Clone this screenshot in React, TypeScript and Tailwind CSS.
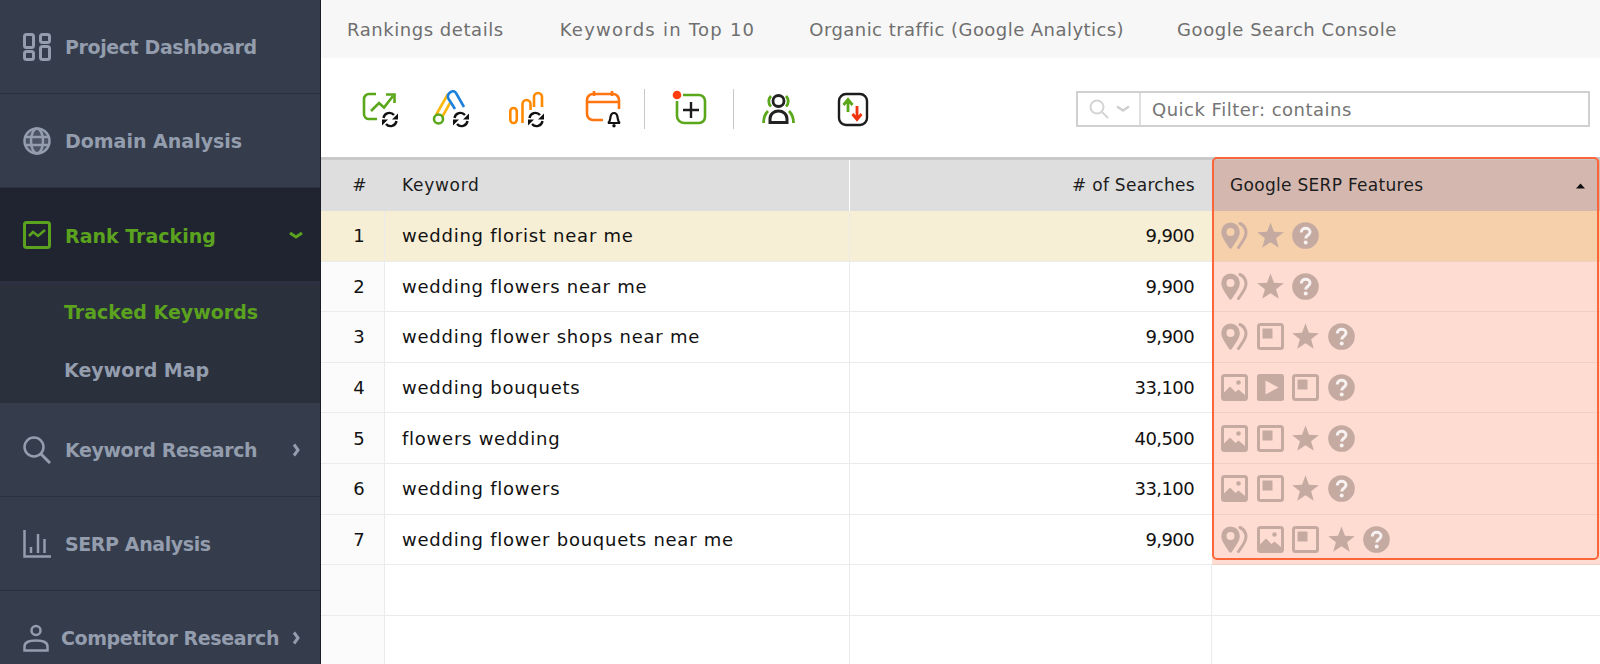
import type { ReactNode } from "react";

type Feature = "pin" | "star" | "help" | "image" | "video" | "snippet";

const rows: { keyword: string; searches: string; features: Feature[] }[] = [
  { keyword: "wedding florist near me", searches: "9,900", features: ["pin", "star", "help"] },
  { keyword: "wedding flowers near me", searches: "9,900", features: ["pin", "star", "help"] },
  { keyword: "wedding flower shops near me", searches: "9,900", features: ["pin", "snippet", "star", "help"] },
  { keyword: "wedding bouquets", searches: "33,100", features: ["image", "video", "snippet", "help"] },
  { keyword: "flowers wedding", searches: "40,500", features: ["image", "snippet", "star", "help"] },
  { keyword: "wedding flowers", searches: "33,100", features: ["image", "snippet", "star", "help"] },
  { keyword: "wedding flower bouquets near me", searches: "9,900", features: ["pin", "image", "snippet", "star", "help"] },
];

function FeatureIcon({ type }: { type: Feature }) {
  const c = "#c5aaa1";
  return (
    <svg width="27" height="27" viewBox="0 0 27 27" className="shrink-0">
      {type === "pin" && (
        <>
          <path
            fillRule="evenodd"
            d="M9.500 0.500a9.300 9.300 0 0 1 9.300 9.500c0 5-4.800 11-8 16a1.500 1.500 0 0 1-2.600 0C5 21 0.300 15 0.300 10A9.300 9.300 0 0 1 9.500 0.500zM9.500 6a4 4 0 1 0 0 8 4 4 0 0 0 0-8z"
            fill={c}
          />
          <path d="M19 1.500c6 2.500 7 9 5 13.500-1.500 3.500-4 7-6.500 10.500" fill="none" stroke={c} strokeWidth="3" strokeLinecap="round" />
        </>
      )}
      {type === "star" && (
        <path d="M13.500 0.500l3.500 9.300 9.800.4-7.700 6.100 2.700 9.500-8.300-5.500-8.300 5.500 2.700-9.500L0.200 10.200l9.800-.4z" fill={c} />
      )}
      {type === "help" && (
        <>
          <circle cx="13.500" cy="13.500" r="13.300" fill={c} />
          <path d="M9.300 10.500c0-2.700 2-4.200 4.400-4.200s4.300 1.400 4.300 3.700c0 3.300-4.300 3.300-4.300 6.500" fill="none" stroke="#fff" strokeOpacity="0.85" strokeWidth="3" />
          <circle cx="13.700" cy="20.600" r="2" fill="#fff" fillOpacity="0.85" />
        </>
      )}
      {type === "image" && (
        <>
          <rect x="1.500" y="1.500" width="24" height="24" rx="2" fill="none" stroke={c} strokeWidth="3" />
          <circle cx="17.500" cy="8.500" r="2.300" fill={c} />
          <path d="M3 24v-5.500l6-6 5.500 5.500 3-2.500 6.500 5.500V24z" fill={c} />
        </>
      )}
      {type === "video" && (
        <>
          <rect x="0" y="0" width="27" height="27" rx="2.500" fill={c} />
          <path d="M8.500 6.500l13 7-13 7z" fill="#ffdcd2" />
        </>
      )}
      {type === "snippet" && (
        <>
          <rect x="1.500" y="1.500" width="24" height="24" rx="2" fill="none" stroke={c} strokeWidth="3" />
          <rect x="5.500" y="5.500" width="10" height="10" fill={c} />
        </>
      )}
    </svg>
  );
}

function Refresh({ x = 20, y = 22 }: { x?: number; y?: number }) {
  return (
    <g transform={`translate(${x} ${y})`} fill="none" stroke="#111" strokeWidth="2.400">
      <path d="M1.500 6a6 6 0 0 1 10.500-3" />
      <path d="M16 7.500H10l6-6z" fill="#111" stroke="none" />
      <path d="M14.500 9a6 6 0 0 1-10.500 3" />
      <path d="M0 7.500h6l-6 6z" fill="#111" stroke="none" />
    </g>
  );
}

function ToolIcon({ className, children }: { className: string; children: ReactNode }) {
  return (
    <svg width="38" height="38" viewBox="0 0 38 38" className={`shrink-0 ${className}`}>
      {children}
    </svg>
  );
}

function Toolbar() {
  return (
    <div className="flex h-[99px] shrink-0 items-center pt-[2px]">
      <ToolIcon className="ml-[41px]">
        <path d="M14 4H7a5 5 0 0 0-5 5v15a5 5 0 0 0 5 5h8" fill="none" stroke="#5ba71b" strokeWidth="2.600" />
        <path d="M9 21l8-8 5 4.500L31 6" fill="none" stroke="#5ba71b" strokeWidth="2.600" />
        <path d="M24 4.500h8.500V13" fill="none" stroke="#5ba71b" strokeWidth="2.600" />
        <Refresh />
      </ToolIcon>
      <ToolIcon className="ml-[32px]">
        <path d="M4 25L16 4M9 29l9-16" fill="none" stroke="#fbb80f" strokeWidth="2.600" />
        <path d="M16 8c-1-5 5-9 8-5l8 14M16 8l7 11" fill="none" stroke="#1a80dc" strokeWidth="2.600" />
        <circle cx="6.500" cy="29" r="4.500" fill="#fff" stroke="#5ba71b" strokeWidth="2.600" />
        <Refresh x={21} />
      </ToolIcon>
      <ToolIcon className="ml-[38px]">
        <rect x="2.300" y="18" width="6.500" height="15" rx="3.250" fill="none" stroke="#ff8a00" strokeWidth="2.600" />
        <path d="M14.500 33V14a4 4 0 0 1 8 0v6" fill="none" stroke="#ff8a00" strokeWidth="2.600" />
        <path d="M26 17V7a4 4 0 0 1 8 0v10" fill="none" stroke="#ff8a00" strokeWidth="2.600" />
        <Refresh x={20} />
      </ToolIcon>
      <ToolIcon className="ml-[39px]">
        <path d="M18 30H8a6 6 0 0 1-6-6V10a6 6 0 0 1 6-6h20a6 6 0 0 1 6 6v9M2 12h32" fill="none" stroke="#ff7510" strokeWidth="2.600" />
        <path d="M9 1v5M27 1v5" stroke="#ff7510" strokeWidth="2.600" />
        <path d="M23 33c2-1 2-3 2.500-6s2.500-4 3.500-4 3 1 3.500 4 .5 5 2.500 6z" fill="#fff" stroke="#111" strokeWidth="2.200" />
        <circle cx="29" cy="35.800" r="1.700" fill="#111" />
      </ToolIcon>
      <div className="ml-[21px] h-[40px] w-px shrink-0 bg-[#c8c8c8]" />
      <ToolIcon className="ml-[26px]">
        <path d="M6 11v15a7 7 0 0 0 7 7h15a6 6 0 0 0 6-6V11a6 6 0 0 0-6-6H12" fill="none" stroke="#5ba71b" strokeWidth="2.600" />
        <path d="M20 12v16M12 20h16" stroke="#1c1c1c" strokeWidth="2.400" />
        <circle cx="6" cy="5" r="4.300" fill="#ff3d0d" />
      </ToolIcon>
      <div className="ml-[24px] h-[40px] w-px shrink-0 bg-[#c8c8c8]" />
      <ToolIcon className="ml-[26px]">
        <circle cx="18.500" cy="11" r="5.500" fill="none" stroke="#222" strokeWidth="2.800" />
        <path d="M10 32.500V29c0-5 4-8 8.500-8s8.500 3 8.500 8v3.500z" fill="none" stroke="#222" strokeWidth="3" />
        <path d="M11 6c-3 3-3 7.500 0 10.500M26 6c3 3 3 7.500 0 10.500M8 21c-3 3-4.500 7-4.500 12M29 21c3 3 4.500 7 4.500 12" fill="none" stroke="#5ba71b" strokeWidth="2.800" />
      </ToolIcon>
      <ToolIcon className="ml-[37px]">
        <rect x="4" y="4" width="28" height="31" rx="7" fill="none" stroke="#1c1c1c" strokeWidth="2.400" />
        <path d="M13 22V10M8.500 15L13 9.500l4.500 5.500" fill="none" stroke="#5ba71b" strokeWidth="2.800" />
        <path d="M22 16v13M17.500 24L22 29.500l4.500-5.500" fill="none" stroke="#f0330f" strokeWidth="2.800" />
      </ToolIcon>
      <div className="ml-[203px] mt-px flex h-[36px] w-[514px] shrink-0 border-2 border-[#d0d0d0]">
        <div className="flex w-[63px] items-center justify-center gap-[6px] border-r-2 border-[#e0e0e0]">
          <svg width="22" height="22" viewBox="0 0 22 22" fill="none" stroke="#d4d4d4" strokeWidth="2">
            <circle cx="9" cy="9" r="6.500" />
            <path d="M14 14l6 6" />
          </svg>
          <svg width="14" height="8" viewBox="0 0 14 8" fill="none" stroke="#cfcfcf" strokeWidth="2.500">
            <path d="M1 1.500l6 4 6-4" />
          </svg>
        </div>
        <div className="flex items-center pl-[11px] text-[18px] tracking-[0.5px] text-[#757575]">Quick Filter: contains</div>
      </div>
    </div>
  );
}

function SideItem({
  icon,
  label,
  open,
  active,
  pad = "pl-[65px]",
  tight,
}: {
  icon: ReactNode;
  label: string;
  open?: boolean;
  active?: boolean;
  pad?: string;
  tight?: boolean;
}) {
  return (
    <div
      className={`relative flex h-[94px] shrink-0 items-center border-b border-[#2b3140] ${pad} text-[19px] font-bold ${
        active ? "bg-[#1f2430] pt-[4px] text-[#5ba21f]" : "bg-[#353c4c] pt-[2px] text-[#939dad]"
      } ${tight ? "tracking-[-0.4px]" : ""}`}
    >
      <span className="absolute left-[23px] top-1/2 -translate-y-1/2">{icon}</span>
      {label}
      {open !== undefined && (
        <svg width="14" height="14" viewBox="0 0 14 14" className="absolute right-[17px] top-1/2 -translate-y-1/2" fill="none" stroke="currentColor" strokeWidth="3">
          {open ? <path d="M1 5l6 4 6-4" /> : <path d="M5 1.500l4 5.500-4 5.500" />}
        </svg>
      )}
    </div>
  );
}

function Sidebar() {
  return (
    <aside className="flex w-[321px] shrink-0 flex-col overflow-hidden border-r border-[#1a1e28]">
      <SideItem
        tight
        label="Project Dashboard"
        icon={
          <svg width="28" height="28" viewBox="0 0 28 28" className="block" fill="none" stroke="#939dad" strokeWidth="3">
            <rect x="1.500" y="1.500" width="9" height="13" rx="2" />
            <rect x="17.500" y="1.500" width="9" height="8" rx="2" />
            <rect x="1.500" y="18.500" width="9" height="8" rx="2" />
            <rect x="17.500" y="13.500" width="9" height="13" rx="2" />
          </svg>
        }
      />
      <SideItem
        label="Domain Analysis"
        icon={
          <svg width="28" height="28" viewBox="0 0 28 28" className="block" fill="none" stroke="#939dad" strokeWidth="2.500">
            <circle cx="14" cy="14" r="12.500" fill="#939dad" fillOpacity="0.25" />
            <ellipse cx="14" cy="14" rx="6" ry="12.500" />
            <path d="M2.500 10h23M2.500 18h23" />
          </svg>
        }
      />
      <SideItem
        active
        open
        label="Rank Tracking"
        icon={
          <svg width="28" height="28" viewBox="0 0 28 28" className="block" fill="none" stroke="#5ba21f">
            <rect x="1.500" y="1.500" width="25" height="25" rx="2" strokeWidth="3" />
            <path d="M6 15l4-4 5 4 7-6" strokeWidth="2.500" />
          </svg>
        }
      />
      <div className="flex h-[121px] shrink-0 flex-col justify-center gap-[29px] border-t-[3px] border-[#2b3140] bg-[#2a303c] pl-[64px] pb-[5px] text-[19px] font-bold">
        <div className="leading-[29px] text-[#5ba21f]">Tracked Keywords</div>
        <div className="leading-[29px] text-[#939dad]">Keyword Map</div>
      </div>
      <SideItem
        tight
        open={false}
        label="Keyword Research"
        icon={
          <svg width="28" height="28" viewBox="0 0 28 28" className="block" fill="none" stroke="#939dad" strokeWidth="2.500">
            <circle cx="11" cy="11" r="9.500" />
            <path d="M18 18l9 9" strokeWidth="3" />
          </svg>
        }
      />
      <SideItem
        tight
        label="SERP Analysis"
        icon={
          <svg width="28" height="28" viewBox="0 0 28 28" className="block" fill="none" stroke="#939dad" strokeWidth="2.500">
            <path d="M1.500 0v26.500H28" />
            <path d="M8 17v6M15 4v19M21.500 9v14" />
          </svg>
        }
      />
      <SideItem
        tight
        open={false}
        label="Competitor Research"
        pad="pl-[61px]"
        icon={
          <svg width="26" height="28" viewBox="0 0 26 28" className="block" fill="none" stroke="#939dad" strokeWidth="2.500">
            <circle cx="13" cy="6.500" r="4.500" />
            <path d="M1.500 26.500v-4c0-4 5-6 11.500-6s11.500 2 11.500 6v4z" />
          </svg>
        }
      />
    </aside>
  );
}

function Table() {
  const grid = "grid grid-cols-[64px_465px_362px_1fr]";
  return (
    <div className="relative border-t-[3px] border-[#c9c9c9]">
      <div className={`${grid} h-[51px] items-center bg-[#dedede] text-[17px] tracking-[0.3px] text-[#1c1c1c]`}>
        <div className="pl-[13px] text-center">#</div>
        <div className="flex h-full items-center border-r border-white pl-[17px] tracking-[0.7px]">Keyword</div>
        <div className="pr-[17px] text-right">
          # of Searches
        </div>
        <div className="flex h-full items-center justify-between bg-[#d4b8b0] pl-[18px] pr-[15px]">
          Google SERP Features
          <svg width="9" height="6" viewBox="0 0 9 6">
            <path d="M4.500 0.500L9 5.500H0z" fill="#111" />
          </svg>
        </div>
      </div>
      {rows.map((row, i) => (
        <div key={row.keyword} className={`${grid} h-[50.6px] text-[18px] text-[#111]`}>
          <div className={`flex items-center justify-center border-b border-r border-[#ebebeb] pl-[13px] ${i === 0 ? "bg-[#f6eed5]" : "bg-[#fbfbfb]"}`}>{i + 1}</div>
          <div className={`flex items-center border-b border-r border-[#ebebeb] pl-[17px] tracking-[0.75px] ${i === 0 ? "bg-[#f6eed5]" : "bg-white"}`}>{row.keyword}</div>
          <div className={`flex items-center justify-end border-b border-[#ebebeb] pr-[18px] tracking-[-0.6px] ${i === 0 ? "bg-[#f6eed5]" : "bg-white"}`}>{row.searches}</div>
          <div className={`flex items-center gap-[8.500px] border-b border-[#f0cfc5] pl-[9px] ${i === 0 ? "bg-[#f5d0ab]" : "bg-[#ffdcd2]"}`}>
            {row.features.map((f, j) => (
              <FeatureIcon key={j} type={f} />
            ))}
          </div>
        </div>
      ))}
      {[0, 1].map((i) => (
        <div key={i} className={`${grid} h-[50.6px]`}>
          <div className="border-b border-r border-[#ebebeb] bg-[#fbfbfb]" />
          <div className="border-b border-r border-[#ebebeb]" />
          <div className="border-b border-r border-[#ebebeb]" />
          <div className="border-b border-[#ebebeb]" />
        </div>
      ))}
      {/* highlight around the SERP column */}
      <div className="pointer-events-none absolute left-[891px] top-[-3px] h-[403px] w-[387px] rounded-[5px] border-2 border-[#fb6537]" />
    </div>
  );
}

export default function App() {
  return (
    <div className="flex h-[664px] w-[1600px] overflow-hidden bg-white font-[DejaVu_Sans,sans-serif]">
      <Sidebar />
      <main className="flex min-w-0 flex-1 flex-col">
        <nav className="flex h-[58px] shrink-0 items-center bg-[#f7f7f7] pl-[26px] text-[18px] tracking-[0.55px] text-[#6f6f6f]">
          <span>Rankings details</span>
          <span className="ml-[56px] tracking-[1.25px]">Keywords in Top 10</span>
          <span className="ml-[54px] tracking-[0.45px]">Organic traffic (Google Analytics)</span>
          <span className="ml-[53px]">Google Search Console</span>
        </nav>
        <Toolbar />
        <Table />
      </main>
    </div>
  );
}
